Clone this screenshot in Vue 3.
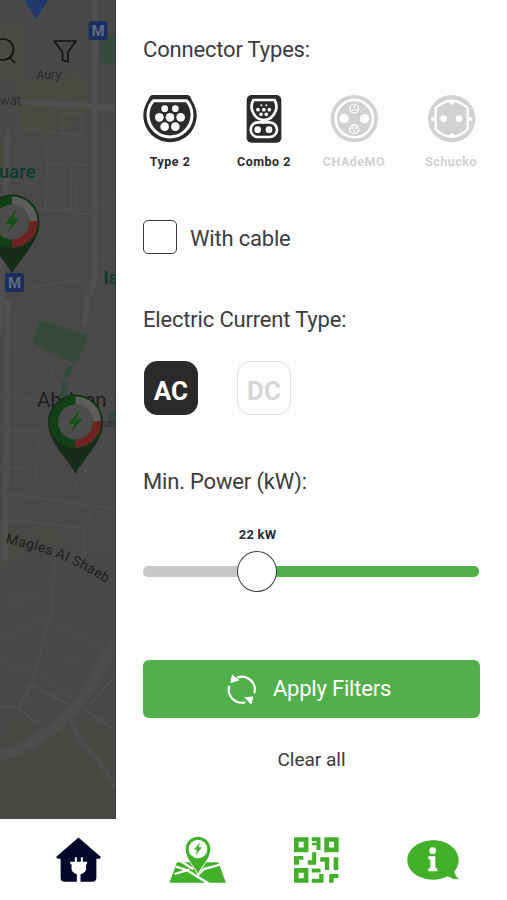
<script setup>
import { ref } from 'vue'

const connectors = ref([
  { id: 'type2', label: 'Type 2', active: true },
  { id: 'combo2', label: 'Combo 2', active: true },
  { id: 'chademo', label: 'CHAdeMO', active: false },
  { id: 'schucko', label: 'Schucko', active: false },
])
const currents = ref([
  { label: 'AC', active: true },
  { label: 'DC', active: false },
])
const withCable = ref(false)
const power = ref(22)
const powerShare = 34
</script>

<template>
  <div class="screen">
    <main class="content">
      <svg class="map" viewBox="0 0 116 819" width="116" height="819">
        <defs>
          <linearGradient id="land" x1="0" y1="0" x2="0" y2="1">
            <stop offset="0" stop-color="#484847" />
            <stop offset="0.5" stop-color="#494949" />
            <stop offset="1" stop-color="#474744" />
          </linearGradient>
          <g id="pin">
            <path d="M0 52C-5 40-27.500 21-27.500 0A27.500 27.500 0 1 1 27.500 0C27.500 21 5 40 0 52Z" fill="#172d19" />
            <circle r="21.500" fill="none" stroke="#133f18" stroke-width="9" />
            <path d="M0-21.500A21.500 21.500 0 0 1 21.500 0" fill="none" stroke="#5c5c5a" stroke-width="8" />
            <path d="M21.500-1A21.500 21.500 0 0 1 0 21.500" fill="none" stroke="#702322" stroke-width="8" />
            <circle r="17.500" fill="#4b4c4b" />
            <path d="M3-11L-7 2H-1L-4 10L7-3H1L4-11Z" fill="#15501b" />
          </g>
        </defs>
        <rect width="116" height="819" fill="url(#land)" />
        <g fill="#4b4a42">
          <path d="M22 80L84 78L91 108L58 130L20 132Z" />
          <path d="M0 28H25V76H0ZM0 139L10 145V165L0 170Z" />
          <path d="M0 520L30 542L0 568ZM36 530L62 535L57 550H35Z" opacity=".5" />
        </g>
        <path d="M101 38L116 35V66L101 62Z" fill="#354b40" />
        <path d="M39 320L89 336L76 364L32 343ZM67 364L74 367L68 379L64 376ZM62 380L68 382L66 398L60 397ZM108 414L116 410V425L108 422Z" fill="#354a3d" />
        <g fill="none" stroke="#4f4f4f">
          <path d="M95 0V280L87 300L85 325M8 130L0 330M8 300L5 560M0 100L116 108" stroke-width="6" />
          <path d="M45 136L47 164L45 215M45 164L92 165M62 114H82V134H62ZM20 128L92 137M71 165V212L45 211M10 180L38 185M78 173L74 215L94 213M40 210L94 209M0 214L38 210M28 288L65 282L116 277M90 272L116 250M100 208L116 194" stroke-width="1.500" />
          <path d="M0 431L45 430M0 395L56 403M20 350L55 365L38 401M31 353L24 372L36 378M0 493L56 500L116 509M39 440L34 491M77 478L73 497M88 432L86 478M0 467L28 469M94 505L85 524L82 558M9 520L82 528L116 548M55 550L52 610L30 690L19 708M0 642L41 617L116 655M0 660L43 676L76 702M64 656L80 662" stroke-width="1.300" />
          <path d="M0 756C45 744 68 715 89 690L116 641" stroke-width="11" stroke="#4d4d4b" />
          <path d="M68 716L83 744L100 762L116 788" stroke-width="5" stroke="#4d4d4b" />
          <path d="M0 707H19L30 684L68 704M18 708L36 723M76 703L90 714L116 730M90 705L116 675" stroke-width="2" />
        </g>
        <g fill="none" stroke="#515151" opacity=".4">
          <path d="M12 320H24V344H0M14 390L35 399L29 419M20 445V485M31 443V482M50 446L48 485M63 449V488M19 460H65M17 475H73M98 430V482M108 440V490M88 451H110M50 180V208M61 181V205M84 178V201M51 223V268M65 218V270M80 219V250M48 239H82M48 256H90M12 595H40M11 604H38M14 627H38V638M16 585V610M65 634L82 629V650L68 648M5 720V735M25 695L38 698M100 700L116 692M64 725L59 770M75 755L65 790M37 743L35 782L55 800" />
        </g>
        <rect x="0" y="25" width="28" height="48" rx="5" fill="#494948" opacity=".6" />
        <rect x="39" y="25" width="50" height="48" rx="5" fill="#494948" opacity=".6" />
        <path d="M25 0H48L36 19Z" fill="#20386c" />
        <g fill="none" stroke="#141414" stroke-width="1.700">
          <circle cx="3" cy="49.500" r="10.500" />
          <path d="M9 57L15.500 63" />
          <path d="M54 41H76L68 52V62L62.500 60V52Z" stroke-linejoin="round" />
        </g>
        <g class="metro">
          <rect x="88.500" y="21" width="19" height="19" rx="3" fill="#1b2d61" />
          <text x="98" y="36" text-anchor="middle">M</text>
        </g>
        <text class="place muted" x="0" y="105" font-size="13">wat</text>
        <text class="place muted" x="36" y="79" font-size="13" font-style="italic">Aury</text>
        <text class="place teal" x="-1" y="178" font-size="18.500">uare</text>
        <text class="place teal bold" x="103.500" y="284" font-size="18">Is</text>
        <text class="place dark" x="37" y="407" font-size="20.500">Abdeen</text>
        <text class="place dark" x="113.500" y="407" font-size="20">P</text>
        <text class="place muted" x="103" y="427" font-size="11">un</text>
        <use href="#pin" transform="translate(12 222)" />
        <g class="metro">
          <rect x="5" y="273" width="19" height="19" rx="3" fill="#1b2d61" />
          <text x="14.500" y="288" text-anchor="middle">M</text>
        </g>
        <use href="#pin" transform="translate(75.500 422)" />
        <path id="street" d="M5 543Q35 549 55 557Q78 565 114 588" fill="none" />
        <text class="place dark street" font-size="14"><textPath href="#street">Magles Al Shaeb</textPath></text>
        <path d="M115.500 0V819" stroke="#383838" />
      </svg>

      <section class="filters">
        <h2>Connector Types:</h2>
        <div class="connectors">
          <button v-for="c in connectors" :key="c.id" class="connector" :class="[c.id, { off: !c.active }]">
            <svg v-if="c.id === 'type2'" viewBox="38 42 162 147" width="54" height="49">
              <path d="M67 45H171Q180 45 184 60A80 80 0 1 1 54 60Q58 45 67 45Z" fill="currentColor" />
              <path d="M70 62H168L173 67A66 66 0 1 1 65 67Z" fill="none" stroke="#fdfdfd" stroke-width="9" stroke-linejoin="round" />
              <g fill="#fdfdfd">
                <circle cx="103" cy="86" r="10" /><circle cx="135" cy="86" r="10" />
                <circle cx="87" cy="112" r="13" /><circle cx="119" cy="112" r="13" /><circle cx="151" cy="112" r="13" />
                <circle cx="103" cy="140" r="13" /><circle cx="135" cy="140" r="13" />
              </g>
            </svg>
            <svg v-else-if="c.id === 'combo2'" viewBox="348 42 108 147" width="36" height="49">
              <rect x="350" y="45" width="104" height="143" rx="15" fill="currentColor" />
              <g fill="none" stroke="#fdfdfd" stroke-width="8">
                <path d="M370 60H434Q442 75 438 90C431 110 418 120 402 120S373 110 366 90Q362 75 370 60Z" stroke-linejoin="round" />
                <rect x="362" y="127" width="79" height="44" rx="22" />
              </g>
              <g fill="#fdfdfd">
                <circle cx="394" cy="76" r="3" /><circle cx="409" cy="76" r="3" />
                <circle cx="384" cy="89" r="5.500" /><circle cx="401.500" cy="89" r="5.500" /><circle cx="418" cy="89" r="5.500" />
                <circle cx="393" cy="103" r="5.500" /><circle cx="409" cy="103" r="5.500" />
                <circle cx="383" cy="149" r="10" /><circle cx="417" cy="149" r="10" />
              </g>
            </svg>
            <svg v-else-if="c.id === 'chademo'" viewBox="58 42 147 147" width="49" height="49">
              <circle cx="131" cy="116" r="71" fill="currentColor" />
              <circle cx="131" cy="116" r="56" fill="none" stroke="#fdfdfd" stroke-width="8" />
              <circle cx="100" cy="116" r="14" fill="#fdfdfd" /><circle cx="162" cy="116" r="14" fill="#fdfdfd" />
              <g fill="none" stroke="#fdfdfd" stroke-width="4">
                <circle cx="131" cy="86" r="13" /><circle cx="131" cy="148" r="13" />
              </g>
              <g fill="#fdfdfd">
                <circle cx="131" cy="81" r="3" /><circle cx="126" cy="90" r="3" /><circle cx="136" cy="90" r="3" />
                <circle cx="126" cy="144" r="3" /><circle cx="136" cy="144" r="3" /><circle cx="131" cy="153" r="3" />
              </g>
            </svg>
            <svg v-else viewBox="350 42 147 147" width="49" height="49">
              <circle cx="424" cy="116" r="71" fill="currentColor" />
              <path d="M376 84Q424 40 472 84V148Q424 192 376 148Z" fill="none" stroke="#fdfdfd" stroke-width="7" stroke-linejoin="round" />
              <g fill="#fdfdfd">
                <circle cx="400" cy="116" r="10" /><circle cx="446" cy="116" r="10" />
                <circle cx="368" cy="117" r="6" /><circle cx="480" cy="117" r="6" />
                <path d="M417 61H431V70L424 76L417 70ZM417 171H431V164L424 158L417 164Z" />
              </g>
            </svg>
            <span>{{ c.label }}</span>
          </button>
        </div>

        <label class="cable">
          <input v-model="withCable" type="checkbox" />
          <span>With cable</span>
        </label>

        <h2>Electric Current Type:</h2>
        <div class="currents">
          <button v-for="c in currents" :key="c.label" class="current" :class="{ on: c.active }">{{ c.label }}</button>
        </div>

        <h2>Min. Power (kW):</h2>
        <div class="slider" :style="{ '--share': powerShare + '%' }">
          <output>{{ power }} kW</output>
          <div class="track"><i class="thumb"></i></div>
        </div>

        <button class="apply">
          <svg viewBox="290 70 90 92" width="30" height="31" fill="none" stroke="currentColor" stroke-width="6.500">
            <path d="M321 80A39 39 0 0 1 372 127" />
            <path d="M297 105A39 39 0 0 0 345 154" />
            <path d="M305 71L328 88L300 97ZM342 139L369 137L363 162Z" fill="currentColor" stroke="none" />
          </svg>
          <span>Apply Filters</span>
        </button>
        <button class="clear">Clear all</button>
      </section>
    </main>

    <nav class="tabs">
      <a class="home">
        <svg viewBox="168 80 136 138" width="45" height="46">
          <path d="M236 81L303 139Q304 145 298 145H290V203Q290 215 278 215H194Q182 215 182 203V145H174Q168 144 169 139Z" fill="currentColor" />
          <path d="M225 141H231V154H243V141H249V154H262V162H259V177Q257 188 242 192V217H231V192Q217 188 215 177V162H211V154H225Z" fill="#fff" />
        </svg>
      </a>
      <a class="stations">
        <svg viewBox="507 76 171 141" width="57" height="47">
          <path d="M531 155H655L678 216H508Z" fill="currentColor" />
          <path d="M527 168L560 178L625 218M543 152L580 176M594 193L612 175L660 162M524 190L568 177" fill="none" stroke="#fff" stroke-width="7" />
          <path d="M594 190C588 170 557 147 557 115A37 37 0 0 1 631 115C631 147 600 170 594 190Z" fill="currentColor" stroke="#fff" stroke-width="5" paint-order="stroke" />
          <circle cx="594" cy="115" r="28" fill="#fff" />
          <path d="M600 95L582 117H591L587 134L606 110H596Z" fill="currentColor" />
        </svg>
      </a>
      <a class="scan">
        <svg viewBox="102 80 134 136" width="45" height="46">
          <g fill="none" stroke="currentColor" stroke-width="14">
            <path d="M109 87H138V118H109ZM199 87H228V118H199ZM109 179H138V209H109Z" />
          </g>
          <g fill="currentColor">
            <path d="M155 80H181V118H169V104H155V97H169V92H155Z" />
            <path d="M102 136H130V147H117V162H102Z" />
            <path d="M156 125H168V162H143V149H156Z" />
            <path d="M180 140H207V178H194V153H180ZM220 140H234V178H220Z" />
            <path d="M155 173H181V185H155ZM177 190H190V216H155V204H177ZM207 190H234V202H220V216H207Z" />
          </g>
        </svg>
      </a>
      <a class="info">
        <svg viewBox="440 88 156 120" width="52" height="40">
          <path d="M518 89C561 89 595 115 595 149C595 162 590 173 582 183Q584 195 596 206Q577 207 562 197C549 204 534 207 518 207C475 207 441 182 441 149S475 89 518 89Z" fill="currentColor" />
          <circle cx="517" cy="120" r="10" fill="#fff" />
          <path d="M504 137H525V173H531V182H504V173H510V146H504Z" fill="#fff" />
        </svg>
      </a>
    </nav>
  </div>
</template>

<style>
body { background: #fff; }
</style>

<style scoped>
.screen {
  width: 507px;
  height: 900px;
  overflow: hidden;
  display: flex;
  flex-direction: column;
  font-family: Roboto, "Liberation Sans", sans-serif;
  color: #3c3c3c;
}
button {
  font: inherit;
  color: inherit;
  background: none;
  border: 0;
  padding: 0;
}
.content { display: flex; height: 819px; }
.map { display: block; flex: none; }
.place { font-family: Roboto, sans-serif; }
.muted { fill: #2a2a2a; }
.dark { fill: #1e1e1e; }
.teal { fill: #0d3b32; font-weight: 500; }
.bold { font-weight: 700; }
.street { letter-spacing: 0.4px; }
.metro text { font: 700 15px Roboto, sans-serif; fill: #626a80; }
.filters {
  flex: 1;
  background: #fdfdfd;
  padding: 37px 27px 0;
  display: flex;
  flex-direction: column;
  align-items: stretch;
}
h2 {
  margin: 0;
  font-size: 22px;
  font-weight: 400;
  line-height: 26px;
  letter-spacing: -0.18px;
  white-space: nowrap;
}
.connectors { display: flex; margin-top: 31px; height: 76px; }
.connector {
  display: flex;
  flex-direction: column;
  align-items: center;
  gap: 12px;
  width: 54px;
  color: #2b2b2b;
  font-size: 12.5px;
  font-weight: 700;
  line-height: 14px;
  letter-spacing: 0.5px;
  white-space: nowrap;
}
.combo2 { margin-left: 40px; }
.chademo { margin-left: 36px; }
.schucko { margin-left: 43px; }
.connector svg { display: block; flex: none; }
.connector.off { color: #d2d2d2; }
.cable {
  display: flex;
  align-items: center;
  gap: 13px;
  height: 34px;
  margin: 50px 0 53px;
  font-size: 22px;
  letter-spacing: -0.2px;
}
.cable span { padding-top: 2px; }
.cable input {
  appearance: none;
  margin: 0;
  width: 34px;
  height: 34px;
  border: 1.5px solid #3b3b3b;
  border-radius: 5px;
  background: #fff;
}
.currents { display: flex; gap: 39px; margin: 28px 0 54px 1px; }
.current {
  width: 54px;
  height: 54px;
  box-sizing: border-box;
  border: 1px solid #dedede;
  border-radius: 13px;
  color: #d6d6d6;
  font-size: 26px;
  font-weight: 700;
  line-height: 58px;
}
.current.on { background: #2a2a2a; border-color: #2a2a2a; color: #fff; }
.slider { display: flex; flex-direction: column; margin-top: 33px; }
.slider output {
  width: 80px;
  margin-left: calc(var(--share) - 40px);
  text-align: center;
  color: #2b2b2b;
  font-size: 13px;
  font-weight: 700;
  line-height: 14px;
  letter-spacing: 0.2px;
}
.track {
  display: flex;
  align-items: center;
  width: 336px;
  height: 11px;
  margin-top: 24px;
  border-radius: 5px;
  background: linear-gradient(to right, #c9c7c8 var(--share), #52b04c var(--share));
}
.thumb {
  flex: none;
  box-sizing: border-box;
  width: 40px;
  height: 41px;
  margin-left: calc(var(--share) - 20px);
  border: 1.3px solid #3b3b3b;
  border-radius: 50%;
  background: #fff;
}
.apply {
  display: flex;
  align-items: center;
  justify-content: center;
  gap: 16px;
  width: 337px;
  height: 58px;
  margin-top: 83px;
  padding-right: 5px;
  box-sizing: border-box;
  border-radius: 6px;
  background: #52b04c;
  color: #fff;
  font-size: 22px;
  line-height: 26px;
  letter-spacing: -0.2px;
}
.apply span { margin-top: -1px; }
.clear {
  align-self: center;
  margin-top: 31px;
  font-size: 19px;
  line-height: 22px;
}
.tabs {
  display: flex;
  align-items: center;
  height: 81px;
  padding-left: 56px;
  box-sizing: border-box;
  background: #fff;
  color: #43b02a;
}
.tabs svg { display: block; }
.home { color: #030729; }
.stations { margin-left: 68px; }
.scan { margin-left: 68px; }
.info { margin-left: 68px; }
</style>
